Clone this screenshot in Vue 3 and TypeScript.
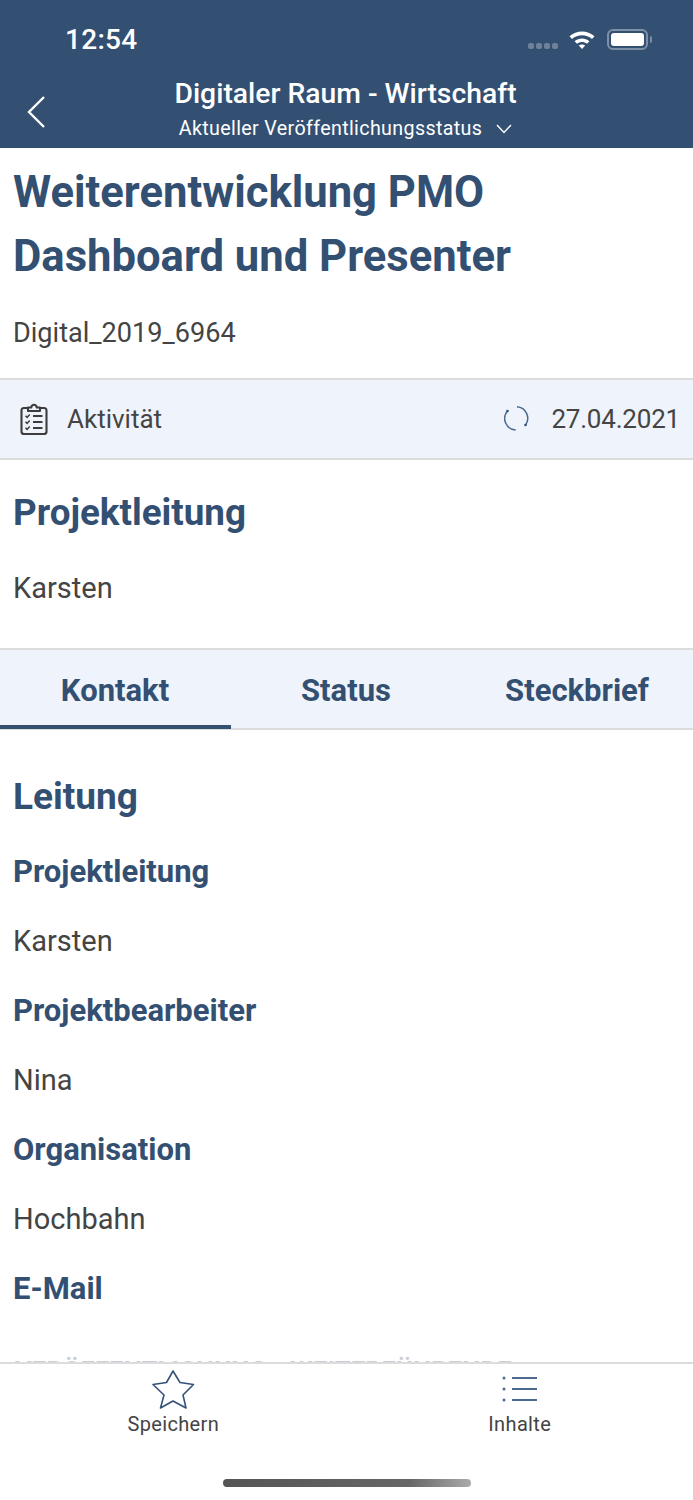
<template>
  <div class="screen">
    <header class="topbar">
      <div class="status">
        <span class="clock">12:54</span>
        <div class="status-icons">
          <div class="signal"><i v-for="n in 4" :key="n"></i></div>
          <svg class="wifi" width="28" height="20" viewBox="0 0 28 20">
            <path d="M1.5 7.2C8.6 .9 19.4 .9 26.5 7.2L24 9.9C18.2 4.9 9.8 4.9 4 9.9Z" fill="#fff" />
            <path d="M6.6 12.3C10.9 8.7 17.1 8.7 21.4 12.3L19 14.8C16 12.5 12 12.5 9 14.8Z" fill="#fff" />
            <path d="M10.8 16.4C12.7 15.1 15.3 15.1 17.2 16.4L14 20Z" fill="#fff" />
          </svg>
          <div class="battery"><span></span></div>
          <div class="battery-tip"></div>
        </div>
      </div>
      <div class="navrow">
        <svg class="back" width="20" height="34" viewBox="0 0 20 34">
          <path d="M18 2 L3 17 L18 32" fill="none" stroke="#fff" stroke-width="2.4" />
        </svg>
        <div class="nav-title">Digitaler Raum - Wirtschaft</div>
        <div class="nav-sub">
          <span>Aktueller Veröffentlichungsstatus</span>
          <svg width="16" height="10" viewBox="0 0 16 10">
            <path d="M1 1 L8 8.5 L15 1" fill="none" stroke="#fff" stroke-width="1.4" />
          </svg>
        </div>
      </div>
    </header>

    <section class="intro">
      <h1>Weiterentwicklung PMO Dashboard und Presenter</h1>
      <p class="code">Digital_2019_6964</p>
    </section>

    <div class="infobar">
      <div class="info-left">
        <svg width="28" height="32" viewBox="0 0 28 32" fill="none" stroke="#3d3d3d" stroke-width="2.1">
          <rect x="1.5" y="5" width="25" height="26" rx="2.5" />
          <path d="M8 8V4.5H11.2C11.8 .8 16.2 .8 16.8 4.5H20V8Z" fill="#eff3fb" stroke-linejoin="round" />
          <path d="M5.5 12.8l1.6 1.6 2.6-2.8M5.5 18.8l1.6 1.6 2.6-2.8M5.5 24.8l1.6 1.6 2.6-2.8" stroke-width="1.5" />
          <path d="M13 13h9.5M13 19h9.5M13 25h9.5" stroke-width="1.9" />
        </svg>
        <span>Aktivität</span>
      </div>
      <div class="info-right">
        <svg width="26" height="26" viewBox="0 0 26 26" fill="none" stroke="#4a6a92" stroke-width="1.5">
          <path d="M3.5 5A11.5 11.5 0 0 0 11.7 24" />
          <path d="M13 .8A11.5 11.5 0 0 1 21.5 19" />
          <circle cx="3.5" cy="5" r="1.3" fill="#34527a" stroke="none" />
          <circle cx="21.5" cy="19" r="1.3" fill="#34527a" stroke="none" />
        </svg>
        <span class="date">27.04.2021</span>
      </div>
    </div>

    <section class="lead">
      <h2>Projektleitung</h2>
      <p>Karsten</p>
    </section>

    <nav class="tabs">
      <div
        v-for="tab in tabs"
        :key="tab"
        class="tab"
        :class="{ active: tab === activeTab }"
      >
        {{ tab }}
      </div>
    </nav>

    <section class="contact">
      <h3>Leitung</h3>
      <template v-for="item in contacts" :key="item.label">
        <h4>{{ item.label }}</h4>
        <p v-if="item.value">{{ item.value }}</p>
      </template>
      <div class="next-heading">VERÖFFENTLICHUNG - WEITERFÜHRENDE</div>
    </section>

    <footer class="bottombar">
      <div class="bottom-item">
        <svg width="44" height="42" viewBox="0 0 44 42">
          <path d="M22 1L29 12.5L42.5 14.5L32 25L35 38L22 31L9.5 38L13 25L2 14.5L15.5 12.5Z" fill="none" stroke="#34527a" stroke-width="1.6" stroke-linejoin="round" />
        </svg>
        <span>Speichern</span>
      </div>
      <div class="bottom-item">
        <svg width="36" height="42" viewBox="0 0 36 42">
          <g fill="#4c6a90">
            <circle cx="2" cy="8" r="1.5" />
            <circle cx="2" cy="19" r="1.5" />
            <circle cx="2" cy="30" r="1.5" />
            <rect x="10" y="7" width="25" height="2" />
            <rect x="10" y="18" width="25" height="2" />
            <rect x="10" y="29" width="25" height="2" />
          </g>
        </svg>
        <span>Inhalte</span>
      </div>
      <div class="home-pill"></div>
    </footer>
  </div>
</template>

<script setup lang="ts">
const tabs: string[] = ['Kontakt', 'Status', 'Steckbrief'];
const activeTab = 'Kontakt';

const contacts: { label: string; value?: string }[] = [
  { label: 'Projektleitung', value: 'Karsten' },
  { label: 'Projektbearbeiter', value: 'Nina' },
  { label: 'Organisation', value: 'Hochbahn' },
  { label: 'E-Mail' }
];
</script>

<style>
html,
body {
  margin: 0;
  background: #fff;
}
</style>

<style scoped>
.screen {
  width: 693px;
  height: 1500px;
  overflow: hidden;
  position: relative;
  display: flex;
  flex-direction: column;
  font-family: Roboto, 'Liberation Sans', sans-serif;
  color: #444;
  background: #fff;
}

.topbar {
  height: 148px;
  flex: none;
  box-sizing: border-box;
  background: #335072;
  color: #fff;
  padding-top: 22px;
}

.status {
  display: flex;
  justify-content: space-between;
  align-items: center;
  height: 34px;
  padding: 0 41px 0 65px;
}

.clock {
  font-size: 28px;
  font-weight: 500;
  letter-spacing: 0.3px;
}

.status-icons {
  display: flex;
  align-items: center;
}

.signal {
  display: flex;
  gap: 2px;
  margin-top: 14px;
  margin-right: 10px;
}

.signal i {
  width: 6px;
  height: 6px;
  border-radius: 2px;
  background: #6f8299;
}

.wifi {
  margin-right: 11px;
  margin-top: -1px;
}

.battery {
  box-sizing: border-box;
  width: 41px;
  height: 21px;
  padding: 2px;
  border: 2px solid #7d90a8;
  border-radius: 6px;
}

.battery span {
  display: block;
  height: 100%;
  border-radius: 3px;
  background: #fff;
}

.battery-tip {
  width: 2px;
  height: 7px;
  margin-left: 2px;
  border-radius: 0 2px 2px 0;
  background: #7d90a8;
}

.navrow {
  position: relative;
  display: flex;
  flex-direction: column;
  align-items: center;
  margin-top: 19px;
  padding-right: 2px;
}

.back {
  position: absolute;
  left: 26px;
  top: 20px;
}

.nav-title {
  font-size: 28.3px;
  font-weight: 500;
  line-height: 38px;
}

.nav-sub {
  display: flex;
  align-items: center;
  gap: 14px;
  font-size: 19.7px;
  line-height: 32px;
  letter-spacing: 0.35px;
}

.intro {
  padding: 13px 13px 0;
  height: 230px;
  box-sizing: border-box;
  flex: none;
}

h1,
h2,
h3,
h4,
p {
  margin: 0;
}

h1 {
  font-size: 43.6px;
  line-height: 64px;
  font-weight: 700;
  color: #335072;
}

.code {
  margin-top: 26px;
  font-size: 27.1px;
  line-height: 36px;
}

.infobar {
  height: 82px;
  flex: none;
  box-sizing: border-box;
  display: flex;
  justify-content: space-between;
  align-items: center;
  padding: 0 13px 0 20px;
  background: #eff3fb;
  border-top: 2px solid #dcdcdc;
  border-bottom: 2px solid #dcdcdc;
  font-size: 26px;
}

.info-left,
.info-right {
  display: flex;
  align-items: center;
}

.info-left {
  gap: 19px;
}

.info-right {
  gap: 21px;
}

.date {
  letter-spacing: -0.2px;
}

.lead {
  height: 188px;
  flex: none;
  box-sizing: border-box;
  padding-top: 30px;
}

.lead h2 {
  padding: 0 13px;
  font-size: 36.8px;
  line-height: 46px;
  font-weight: 700;
  color: #335072;
}

.lead p {
  padding: 0 13px;
  margin-top: 34px;
  font-size: 29px;
  line-height: 36px;
}

.tabs {
  height: 82px;
  flex: none;
  box-sizing: border-box;
  display: grid;
  grid-template-columns: repeat(3, 1fr);
  background: #eff3fb;
  border-top: 2px solid #dcdcdc;
  border-bottom: 2px solid #dcdcdc;
}

.tab {
  display: flex;
  align-items: center;
  justify-content: center;
  box-sizing: border-box;
  margin-bottom: -1px;
  padding: 6px 1px 0 0;
  border-bottom: 4px solid transparent;
  font-size: 31px;
  font-weight: 700;
  color: #335072;
}

.tab.active {
  border-bottom-color: #335072;
}

.contact {
  padding: 45px 13px 0;
}

.contact h3 {
  font-size: 37px;
  line-height: 44px;
  font-weight: 700;
  color: #335072;
}

.contact h4 {
  margin-top: 35px;
  font-size: 31px;
  line-height: 36px;
  font-weight: 700;
  color: #335072;
}

.contact p {
  margin-top: 33px;
  font-size: 29px;
  line-height: 36px;
  margin-bottom: -1px;
}

.next-heading {
  margin-top: 46px;
  padding-left: 2px;
  font-size: 25.5px;
  line-height: 36px;
  font-weight: 700;
  letter-spacing: 0.2px;
  white-space: nowrap;
  color: #c9ced6;
}

.bottombar {
  position: absolute;
  left: 0;
  right: 0;
  bottom: 0;
  height: 138px;
  display: grid;
  grid-template-columns: 1fr 1fr;
  box-sizing: border-box;
  border-top: 2px solid #dcdcdc;
  background: #fff;
}

.bottom-item {
  display: flex;
  flex-direction: column;
  align-items: center;
  padding-top: 6px;
  font-size: 20px;
  letter-spacing: 0.35px;
  line-height: 26px;
}

.bottom-item svg {
  margin-bottom: -1px;
}

.home-pill {
  position: absolute;
  left: 223px;
  bottom: 13px;
  width: 248px;
  height: 8px;
  border-radius: 4px;
  background: linear-gradient(90deg, #555 0%, #666 75%, #aaa 100%);
}
</style>
